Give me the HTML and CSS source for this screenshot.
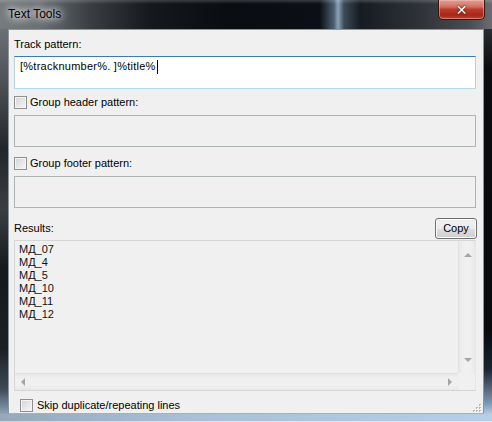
FILE: index.html
```html
<!DOCTYPE html>
<html>
<head>
<meta charset="utf-8">
<link rel="stylesheet" href="styles.css">
</head>
<body>
<div class="window">
  <div class="titlebar">
    <span class="title">Text Tools</span>
    <div class="close"><span class="x">✕</span></div>
  </div>
  <div class="middle">
    <div class="frame-left"></div>
    <div class="client">
      <div class="label first">Track pattern:</div>
      <div class="edit active"><span class="val">[%tracknumber%. ]%title%</span><span class="caret"></span></div>
      <div class="checkrow r1"><span class="check"></span><span class="clabel">Group header pattern:</span></div>
      <div class="edit disabled"></div>
      <div class="checkrow r2"><span class="check"></span><span class="clabel">Group footer pattern:</span></div>
      <div class="edit disabled"></div>
      <div class="resrow">
        <span class="label">Results:</span>
        <button class="btn">Copy</button>
      </div>
      <div class="list">
        <div class="items">
          <div>МД_07</div>
          <div>МД_4</div>
          <div>МД_5</div>
          <div>МД_10</div>
          <div>МД_11</div>
          <div>МД_12</div>
        </div>
        <div class="vscroll"><span class="arr up"></span><span class="arr down"></span></div>
        <div class="hscroll"><span class="arr left"></span><span class="arr right"></span></div>
        <div class="corner"></div>
      </div>
      <div class="checkrow r3"><span class="check"></span><span class="clabel">Skip duplicate/repeating lines</span></div>
      <div class="grip">
        <svg width="9" height="9" viewBox="0 0 9 9">
          <g fill="#b5b5b5">
            <rect x="7" y="1" width="2" height="2"/>
            <rect x="4" y="4" width="2" height="2"/><rect x="7" y="4" width="2" height="2"/>
            <rect x="1" y="7" width="2" height="2"/><rect x="4" y="7" width="2" height="2"/><rect x="7" y="7" width="2" height="2"/>
          </g>
          <g fill="#fff">
            <rect x="8" y="2" width="1" height="1"/>
            <rect x="5" y="5" width="1" height="1"/><rect x="8" y="5" width="1" height="1"/>
            <rect x="2" y="8" width="1" height="1"/><rect x="5" y="8" width="1" height="1"/><rect x="8" y="8" width="1" height="1"/>
          </g>
        </svg>
      </div>
    </div>
    <div class="frame-right"></div>
  </div>
  <div class="frame-bottom"></div>
</div>
</body>
</html>
```
FILE: styles.css
```css
html, body {
  margin: 0;
  padding: 0;
}
body {
  width: 492px;
  height: 422px;
  overflow: hidden;
  background: #5a5e63;
  font-family: "Liberation Sans", Arial, sans-serif;
  font-size: 11px;
  color: #000;
}
.window {
  width: 492px;
  height: 422px;
  display: flex;
  flex-direction: column;
}
.titlebar {
  height: 29px;
  flex: none;
  display: flex;
  align-items: flex-start;
  justify-content: space-between;
  background:
    linear-gradient(to bottom, rgba(255,255,255,0.18), rgba(255,255,255,0) 4px),
    linear-gradient(to right, #767b80 0px, #6a6f74 40px, #3a3e43 90px, #15191e 150px, #090c11 230px, #0c1016 320px, #4e6072 334px, #8da3b8 338px, #3c4a58 344px, #171c22 360px, #2f3338 420px, #4a4e53 470px, #6a6e72 492px);
}
.title {
  margin: 6px 0 0 8px;
  font-size: 12px;
  line-height: 16px;
  color: #000;
  text-shadow: 0 0 6px #fff, 0 0 10px rgba(255,255,255,0.9), 0 0 14px rgba(255,255,255,0.6);
}
.close {
  width: 47px;
  height: 20px;
  margin-right: 7px;
  box-sizing: border-box;
  border: 1px solid #3c1410;
  border-top: none;
  border-radius: 0 0 5px 5px;
  background: linear-gradient(to bottom, #e0a195 0%, #d27062 35%, #bd3a2a 50%, #a9261a 80%, #bd4631 100%);
  box-shadow: inset 0 0 0 1px rgba(255,200,190,0.45);
  display: flex;
  align-items: center;
  justify-content: center;
}
.x {
  color: #fff;
  font-family: "DejaVu Sans", sans-serif;
  font-weight: bold;
  font-size: 14px;
  line-height: 14px;
  text-shadow: 0 0 1px #3a0c06, 0 0 2px #3a0c06;
}
.middle {
  flex: 1;
  display: flex;
}
.frame-left {
  width: 8px;
  flex: none;
  background: linear-gradient(to bottom, #6c7075 0px, #4a4e53 60px, #222529 120px, #3b3e42 180px, #16191c 240px, #1d2024 320px, #3d4a57 360px, #8ba2b8 385px);
}
.frame-right {
  width: 8px;
  flex: none;
  background: linear-gradient(to bottom, #2a2d31 0px, #0a0c0f 40px, #07090c 300px, #1b2430 340px, #7f9ab5 375px, #b3cde6 385px);
}
.frame-bottom {
  height: 8px;
  flex: none;
  background: linear-gradient(to right, #97a9ba, #a9c0d6 40%, #b6cfe6 100%);
  box-shadow: inset 0 -1px 0 rgba(255,255,255,0.5);
}
.client {
  flex: 1;
  position: relative;
  background: #f0f0f0;
  border: 1px solid #8c949c;
  border-bottom-color: #9fb1c2;
  padding: 0 7px 0 5px;
  display: flex;
  flex-direction: column;
}
.label {
  line-height: 13px;
  height: 13px;
}
.label.first {
  margin-top: 8px;
}
.edit {
  height: 33px;
  box-sizing: border-box;
  margin-top: 5px;
}
.edit.active {
  background: #fff;
  border: 1px solid #b5cfe7;
  border-top-color: #3d7bad;
  border-bottom-color: #b7d9ed;
  padding: 3px 0 0 5px;
  line-height: 13px;
  display: flex;
  align-items: flex-start;
}
.val {
  letter-spacing: 0.25px;
}
.caret {
  display: inline-block;
  width: 1px;
  height: 14px;
  background: #000;
  margin-left: 1px;
  margin-top: 0;
}
.edit.disabled {
  background: #f0f0f0;
  border: 1px solid #adb2b5;
  height: 32px;
  margin-top: 6px;
}
.checkrow {
  display: flex;
  align-items: center;
  height: 13px;
}
.checkrow.r1 { margin-top: 7px; }
.checkrow.r2 { margin-top: 10px; }
.checkrow.r3 { margin-top: 8px; margin-left: 6px; }
.check {
  width: 13px;
  height: 13px;
  box-sizing: border-box;
  border: 1px solid #8e8f8f;
  background: linear-gradient(135deg, #d2d4d7 0%, #e8e9ea 60%, #f6f6f6 100%);
  box-shadow: inset 0 0 0 1px #f4f4f4;
  flex: none;
}
.clabel {
  margin-left: 3px;
  line-height: 13px;
}
.r3 .clabel { margin-left: 4px; }
.resrow {
  margin-top: 10px;
  height: 21px;
  display: flex;
  align-items: center;
  justify-content: space-between;
}
.btn {
  width: 42px;
  height: 21px;
  margin-right: -1px;
  padding: 0;
  box-sizing: border-box;
  border: 1px solid #707070;
  border-radius: 3px;
  background: linear-gradient(to bottom, #f2f2f2 0%, #ebebeb 50%, #dddddd 51%, #cfcfcf 100%);
  box-shadow: inset 0 0 0 1px #fcfcfc;
  font-family: "Liberation Sans", Arial, sans-serif;
  font-size: 11px;
  color: #000;
  line-height: 17px;
}
.list {
  margin-top: 1px;
  height: 151px;
  box-sizing: border-box;
  border: 1px solid #d5d5d5;
  border-right-color: #e6e6e6;
  display: grid;
  grid-template-columns: 1fr 17px;
  grid-template-rows: 1fr 17px;
  background: #f0f0f0;
}
.items {
  padding: 2px 0 0 4px;
  line-height: 13px;
  color: #101010;
}
.vscroll {
  position: relative;
  background: linear-gradient(to right, #e8e8e8, #f0f0f0 30%, #f0f0f0 70%, #e8e8e8);
  border-left: 1px solid #e2e2e2;
}
.hscroll {
  position: relative;
  background: linear-gradient(to bottom, #e8e8e8, #f0f0f0 30%, #f0f0f0 70%, #e8e8e8);
  border-top: 1px solid #e2e2e2;
}
.corner {
  background: #f0f0f0;
}
.arr {
  position: absolute;
  width: 0;
  height: 0;
}
.arr.up {
  top: 12px;
  left: 5px;
  border-left: 4px solid transparent;
  border-right: 4px solid transparent;
  border-bottom: 4px solid #a5a5a5;
}
.arr.down {
  bottom: 11px;
  left: 5px;
  border-left: 4px solid transparent;
  border-right: 4px solid transparent;
  border-top: 4px solid #a5a5a5;
}
.arr.left {
  left: 6px;
  top: 4px;
  border-top: 4px solid transparent;
  border-bottom: 4px solid transparent;
  border-right: 4px solid #a5a5a5;
}
.arr.right {
  right: 6px;
  top: 4px;
  border-top: 4px solid transparent;
  border-bottom: 4px solid transparent;
  border-left: 4px solid #a5a5a5;
}
.grip {
  position: absolute;
  right: 2px;
  bottom: 1px;
  width: 9px;
  height: 9px;
}
.grip svg { display: block; }
```
